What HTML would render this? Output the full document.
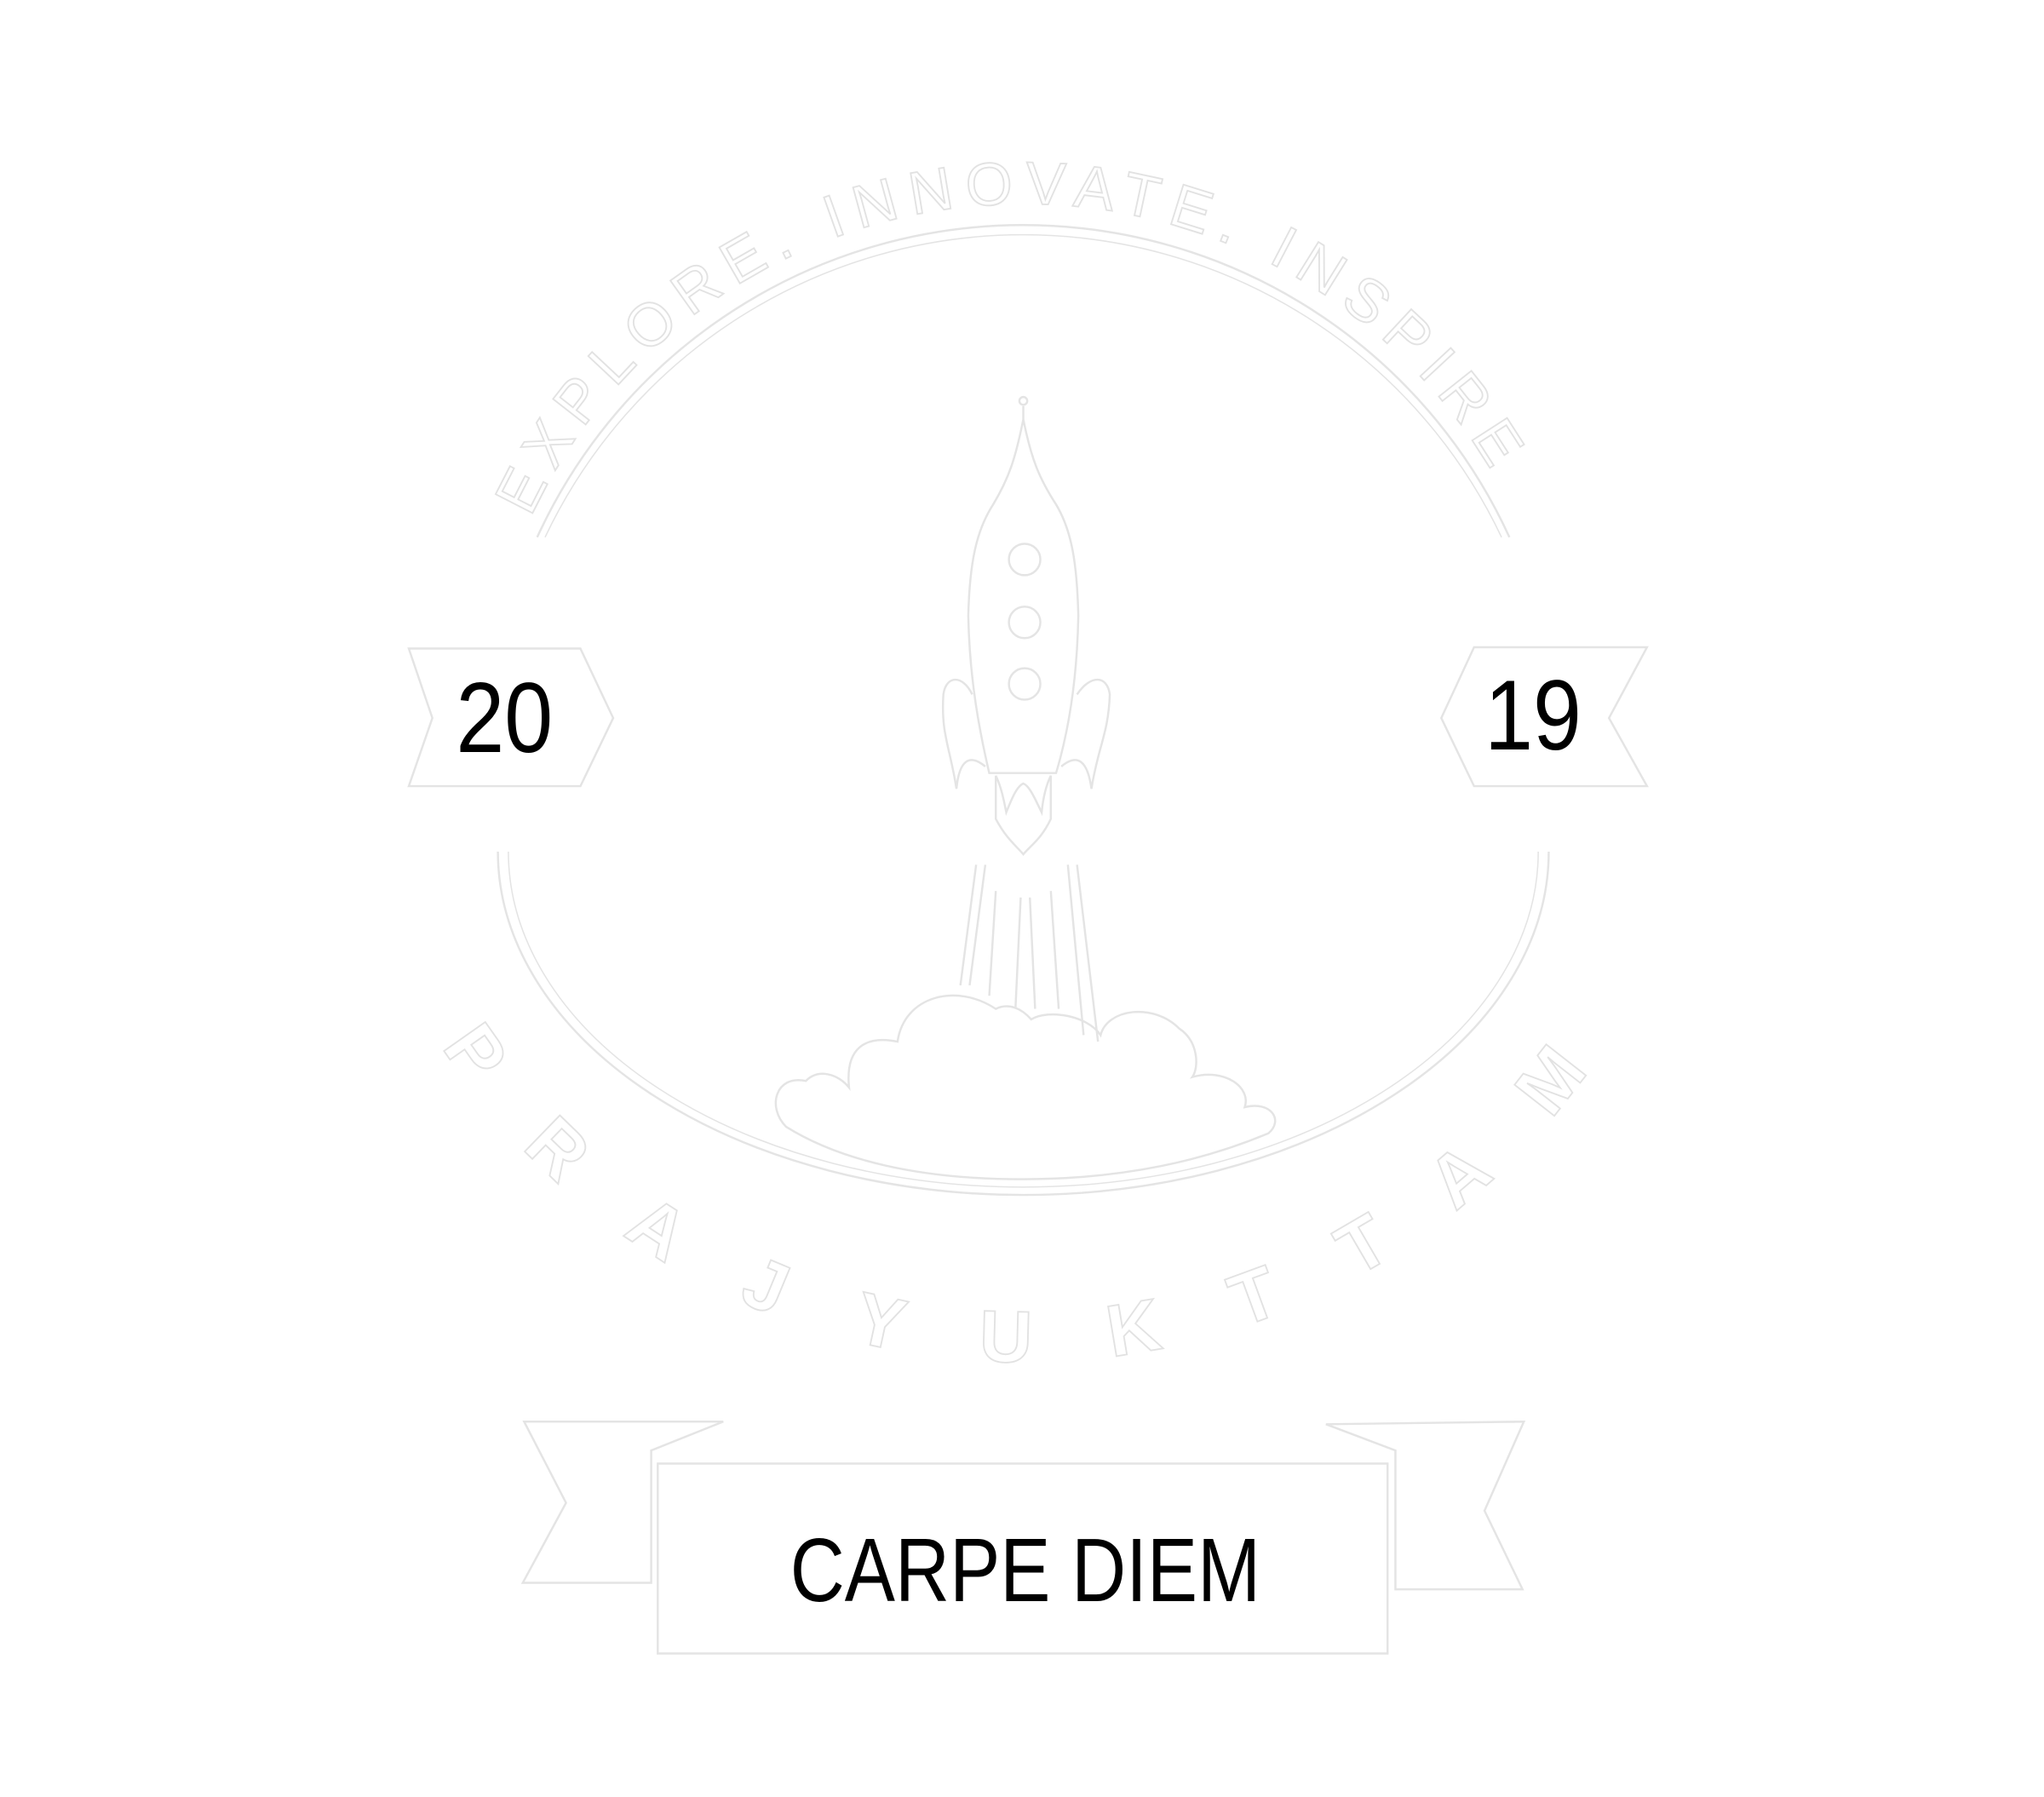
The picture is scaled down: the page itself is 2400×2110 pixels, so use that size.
<!DOCTYPE html>
<html><head><meta charset="utf-8"><style>
html,body{margin:0;padding:0;background:#fff;}
svg{display:block;}
</style></head><body>
<svg width="2400" height="2110" viewBox="0 0 1560 1371.5" xmlns="http://www.w3.org/2000/svg">
<defs>
<path id="topArc" d="M 405 395 A 415 415 0 0 1 1157 395"/>
<path id="botArc" d="M 337 799 A 530 530 0 0 0 1225 799"/>
</defs>
<g fill="none" stroke="#e4e4e4" stroke-width="1.6">
  <path d="M 410 410 A 408 408 0 0 1 1152 410"/>
  <path d="M 416 410 A 404 404 0 0 1 1146 410" stroke-width="1"/>
  <path d="M 380 650 A 401 262 0 0 0 1182 650"/>
  <path d="M 388 650 A 393 256 0 0 0 1174 650" stroke-width="1"/>
  <path d="M 312 495 L 443 495 L 468 548 L 443 600 L 312 600 L 330 548 Z"/>
  <path d="M 1125 494 L 1257 494 L 1228 548 L 1257 600 L 1125 600 L 1100 548 Z"/>
  <path d="M 502 1117 L 1059 1117 L 1059 1262 L 502 1262 Z"/>
  <path d="M 400 1085 L 552 1085 L 497 1107 L 497 1208 L 399 1208 L 432 1147 Z"/>
  <path d="M 1012 1087 L 1163 1085 L 1133 1153 L 1162 1213 L 1065 1213 L 1065 1107 Z"/>
  <circle cx="781" cy="306" r="3"/>
  <path d="M 781 310 L 781 320 C 775 350 770 365 758 385 C 745 405 740 430 739 470 C 740 520 748 560 755 590 L 806 590 C 815 560 822 520 823 470 C 822 430 818 405 806 385 C 793 365 787 350 781 320"/>
  <circle cx="782" cy="427" r="12"/>
  <circle cx="782" cy="475" r="12"/>
  <circle cx="782" cy="522" r="12"/>
  <path d="M 752 585 C 740 575 732 580 730 602 C 725 570 718 560 720 530 C 722 515 735 515 742 530"/>
  <path d="M 810 585 C 822 575 830 580 833 602 C 838 570 846 560 847 530 C 845 515 832 515 822 530"/>
  <path d="M 760 592 L 760 625 C 768 640 775 645 781 652 C 787 645 795 640 802 625 L 802 592 C 798 600 796 610 795 620 C 790 610 786 600 781 598 C 776 600 772 610 768 620 C 766 610 764 600 760 592"/>
  <path d="M 745 660 L 733 752 M 752 660 L 740 752 M 779 685 L 775 770 M 786 685 L 790 770 M 815 660 L 827 790 M 822 660 L 838 795 M 760 680 L 755 760 M 802 680 L 808 770"/>
  <path d="M 600 860 C 585 845 592 820 615 825 C 625 815 640 820 648 830 C 645 800 660 790 685 795 C 690 760 730 750 760 770 C 770 765 780 770 787 778 C 800 770 830 775 840 790 C 845 770 880 765 900 785 C 915 795 915 815 910 822 C 935 815 955 830 950 845 C 970 840 980 855 968 865 C 920 885 860 900 780 900 C 700 900 640 885 600 860 Z"/>
</g>
<text font-family="Liberation Sans Narrow, Liberation Sans, sans-serif" font-size="46" fill="#fff" stroke="#e2e2e2" stroke-width="1.2">
  <textPath href="#topArc" textLength="900" lengthAdjust="spacing">EXPLORE. INNOVATE. INSPIRE</textPath>
</text>
<text font-family="Liberation Sans, sans-serif" font-size="56" font-weight="bold" fill="#fff" stroke="#e2e2e2" stroke-width="1.2">
  <textPath href="#botArc" textLength="1030" lengthAdjust="spacing">PRAJYUKTTAM</textPath>
</text>
<text x="348" y="574" font-family="Liberation Sans, sans-serif" font-size="76" fill="#000" textLength="74" lengthAdjust="spacingAndGlyphs">20</text>
<text x="1133" y="572" font-family="Liberation Sans, sans-serif" font-size="76" fill="#000" textLength="74" lengthAdjust="spacingAndGlyphs">19</text>
<text x="603" y="1222" font-family="Liberation Sans, sans-serif" font-size="69" fill="#000" textLength="359" lengthAdjust="spacingAndGlyphs">CARPE DIEM</text>
</svg>
</body></html>
